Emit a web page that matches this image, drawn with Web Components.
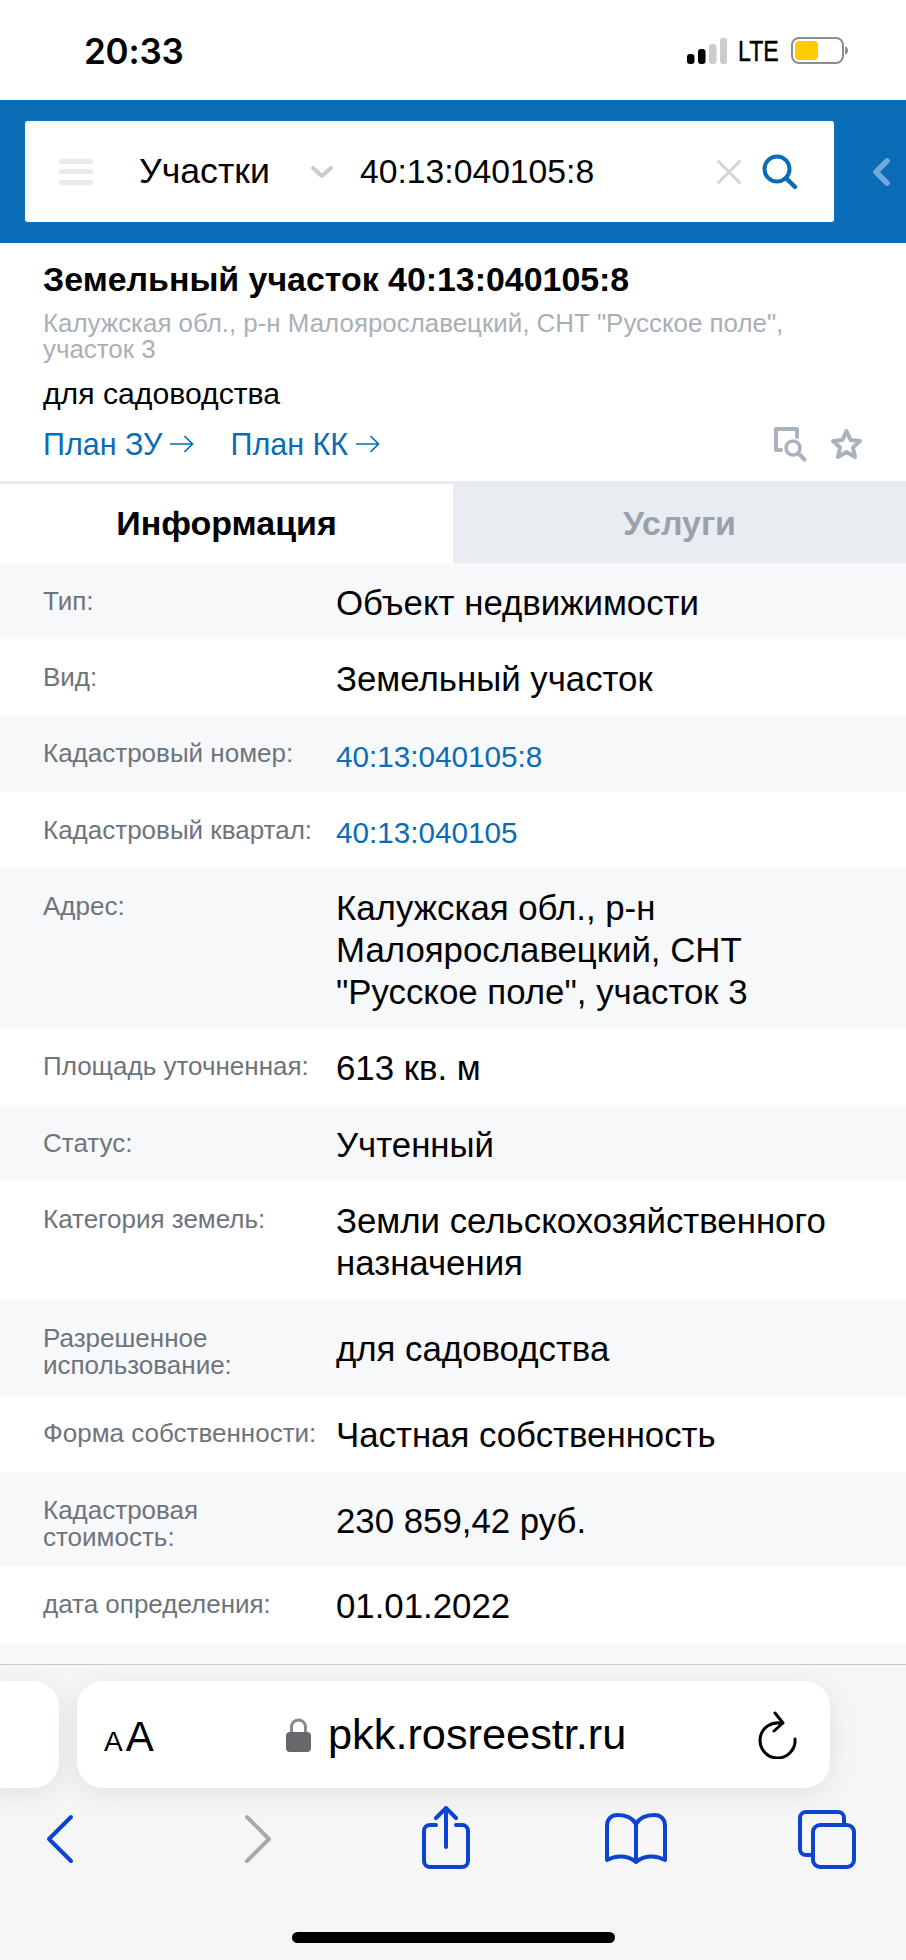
<!DOCTYPE html>
<html><head><meta charset="utf-8">
<style>
html,body{margin:0;padding:0;height:1960px;overflow:hidden;background:#fff}
body{font-family:"Liberation Sans",Arial,sans-serif;display:flex;flex-direction:column;width:906px}
</style></head><body>
<status-bar></status-bar>
<search-header></search-header>
<object-summary></object-summary>
<info-tabs></info-tabs>
<info-table>
<info-row label="Тип:" h="76">Объект недвижимости</info-row>
<info-row label="Вид:" h="76">Земельный участок</info-row>
<info-row label="Кадастровый номер:" h="77" link>40:13:040105:8</info-row>
<info-row label="Кадастровый квартал:" h="76" link>40:13:040105</info-row>
<info-row label="Адрес:" h="160">Калужская обл., р-н Малоярославецкий, СНТ "Русское поле", участок 3</info-row>
<info-row label="Площадь уточненная:" h="77">613 кв. м</info-row>
<info-row label="Статус:" h="76">Учтенный</info-row>
<info-row label="Категория земель:" h="119">Земли сельскохозяйственного назначения</info-row>
<info-row label="Разрешенное использование:" h="95">для садоводства</info-row>
<info-row label="Форма собственности:" h="77">Частная собственность</info-row>
<info-row label="Кадастровая стоимость:" h="94">230 859,42 руб.</info-row>
<info-row label="дата определения:" h="77">01.01.2022</info-row>
</info-table>
<safari-bar></safari-bar>
<script>
function def(name,html){customElements.define(name,class extends HTMLElement{constructor(){super();this.attachShadow({mode:'open'}).innerHTML=html}})}
def('status-bar',`<style>
:host{display:flex;height:100px;flex:none;box-sizing:border-box;padding:2px 57px 0 84px;align-items:center;justify-content:space-between;background:#fff;color:#000}
.t{font:600 35px Inter,"Liberation Sans",sans-serif;letter-spacing:-.2px;line-height:98px}
.r{display:flex;align-items:center}
.lte{font:400 29px "Liberation Sans",sans-serif;-webkit-text-stroke:.4px #000;display:inline-block;width:42px;transform:scaleX(.8);transform-origin:left center;margin:0 11px;line-height:30px}
svg{display:block}
</style><span class="t">20:33</span><span class="r">
<svg width="40" height="26" viewBox="0 0 40 26"><rect x="0" y="16" width="7.500" height="10" rx="3" fill="#000"/><rect x="11" y="11" width="7.500" height="15" rx="3" fill="#000"/><rect x="22" y="6" width="7.500" height="20" rx="3" fill="#ccc"/><rect x="33" y="0" width="7.500" height="26" rx="3" fill="#ccc"/></svg>
<span class="lte">LTE</span>
<svg width="58" height="28" viewBox="0 0 58 28"><rect x="1" y="1" width="51" height="25" rx="7" fill="#fff" stroke="#8d8d8d" stroke-width="2"/><rect x="4" y="4" width="23" height="19" rx="4" fill="#fecb00"/><path d="M54 9.500q3 .5 3 4t-3 4z" fill="#8d8d8d"/></svg>
</span>`);
def('search-header',`<style>
:host{display:flex;height:143px;flex:none;box-sizing:border-box;padding:21px 0 21px 25px;background:#0a6cb7;align-items:stretch}
.card{width:809px;background:#fff;border-radius:3px;display:flex;align-items:center;color:#000;box-shadow:0 0 1px rgba(255,255,255,.5)}
svg{display:block;flex:none}
.a{margin-left:34px}.b{margin-left:46px;width:130px;font-size:35.700px;white-space:nowrap}.c{margin-left:42px}.d{margin-left:27px;font-size:33.700px;width:357px;white-space:nowrap}
.f{margin-left:21px}
</style><div class="card">
<svg class="a" width="34" height="26" viewBox="0 0 34 26"><g fill="#e8e9eb"><rect y="0" width="34" height="5" rx="2"/><rect y="10" width="34" height="5" rx="2"/><rect y="21" width="34" height="5" rx="2"/></g></svg>
<span class="b">Участки</span>
<svg class="c" width="22" height="12" viewBox="0 0 22 12"><path d="M2 2l9 8 9-8" fill="none" stroke="#c7cdd3" stroke-width="4" stroke-linecap="round"/></svg>
<span class="d">40:13:040105:8</span>
<svg width="24" height="24" viewBox="0 0 24 24"><path d="M1.500 1.500l21 21M22.500 1.500l-21 21" stroke="#d4d5d7" stroke-width="3" stroke-linecap="round"/></svg>
<svg class="f" width="36" height="36" viewBox="0 0 36 36"><circle cx="15" cy="15" r="12.500" fill="none" stroke="#0a6cb7" stroke-width="4"/><path d="M24 24l9 9" stroke="#0a6cb7" stroke-width="4.500" stroke-linecap="round"/></svg>
</div>
<svg style="align-self:center;margin-left:38px" width="18" height="28" viewBox="0 0 18 28"><path d="M15 3L4 14l11 11" fill="none" stroke="#74a9d9" stroke-width="5.500" stroke-linecap="round" stroke-linejoin="round"/></svg>`);
const arrow='<svg width="25" height="20" viewBox="0 0 25 20"><path d="M1 10h22.500M15.500 2l8 8-8 8" fill="none" stroke="#0a6cb7" stroke-width="1.700"/></svg>';
def('object-summary',`<style>
:host{display:block;flex:none;height:238px;box-sizing:border-box;padding:16px 43px 0;background:#fff;color:#000}
h1{margin:0;font:700 33.900px/40px "Liberation Sans",sans-serif;white-space:nowrap}
.addr{margin-top:11px;color:#a9afb7;font-size:25.900px;line-height:26px;white-space:nowrap}
.use{margin-top:14px;font-size:30.200px;line-height:36px}
.links{margin-top:9px;display:flex;align-items:center;height:46px;color:#0a6cb7;font-size:30.500px}
.l{display:flex;align-items:center;gap:7px}
.l+.l{margin-left:36px}
.sp{flex:1}
svg{display:block;flex:none}
</style>
<h1>Земельный участок 40:13:040105:8</h1>
<div class="addr">Калужская обл., р-н Малоярославецкий, СНТ "Русское поле",<br>участок 3</div>
<div class="use">для садоводства</div>
<div class="links">
<span class="l">План ЗУ${arrow}</span>
<span class="l">План КК${arrow}</span>
<span class="sp"></span>
<svg width="34" height="35" viewBox="0 0 34 35"><path d="M8 23H3V2h21v8" fill="none" stroke="#a9b2bd" stroke-width="4" stroke-linejoin="round" stroke-linecap="round"/><circle cx="20" cy="21" r="7" fill="none" stroke="#a9b2bd" stroke-width="3.500"/><path d="M25.500 26.500l6 6" stroke="#a9b2bd" stroke-width="4" stroke-linecap="round"/></svg>
<svg style="margin-left:23px" width="33" height="32" viewBox="0 0 33 32"><path d="M16.500 3l4 9 9.500 1-7 6.500 2 9.500-8.500-5-8.500 5 2-9.500-7-6.500 9.500-1z" fill="none" stroke="#a9b2bd" stroke-width="4" stroke-linejoin="round"/></svg>
</div>`);
def('info-tabs',`<style>
:host{display:grid;grid-template-columns:453px 453px;height:82px;flex:none;font:700 34px "Liberation Sans",sans-serif;text-align:center;line-height:84px}
.a{background:#fff;color:#000;box-shadow:inset 0 3px 0 #e9ecf0}.b{background:#e9edf1;color:#99a1ac}
</style><div class="a">Информация</div><div class="b">Услуги</div>`);
def('info-table',`<style>:host{display:flex;flex-direction:column;flex:none;height:1101px;background:#f7f8fa;overflow:hidden}
::slotted(info-row:nth-child(even)){background:#fff}
</style><slot></slot>`);
customElements.define('info-row',class extends HTMLElement{constructor(){super();const s=this.attachShadow({mode:'open'});
s.innerHTML=`<style>
:host{display:grid;grid-template-columns:293px 1fr;box-sizing:border-box;padding:0 0 0 43px;flex:none;background:#f7f8fa}
.k{color:#6e747c;font-size:26px;line-height:27px;padding:25px 8px 0 0;box-sizing:border-box}
.v{color:#000;font-size:34.800px;line-height:42px;padding-top:3px;padding-right:60px;align-self:center}
:host([link]) .v{color:#0a6cb7;font-size:29.700px;padding-top:6px}
</style><div class="k"></div><div class="v"><slot></slot></div>`;}
connectedCallback(){this.shadowRoot.querySelector('.k').textContent=this.getAttribute('label');this.style.height=this.getAttribute('h')+'px'}});
def('safari-bar',`<style>
:host{display:block;flex:1;min-height:0;background:#f6f6f7;border-top:1px solid #c9c9cc;box-sizing:border-box;overflow:hidden;font-family:"Liberation Sans",sans-serif}
.pills{display:flex;gap:18px;margin:16px 0 0 -20px;height:107px}
.pill{background:#fff;border-radius:26px;box-shadow:0 6px 30px rgba(0,0,0,.09)}
.p1{width:79px}.p2{width:753px;display:flex;align-items:center;color:#000}
.aa{margin-left:27px;font-size:42px;width:51px;white-space:nowrap;padding-top:4px}.aa small{font-size:28px;margin-right:3px}
.url{margin-left:131px;display:flex;align-items:center;gap:17px;font-size:43.300px;width:342px;white-space:nowrap}
.rl{margin-left:130px}
.nav{display:flex;align-items:flex-start;height:100px;margin-top:18px;padding-left:45px}
svg{display:block;flex:none}
.bar{width:323px;height:11px;background:#000;border-radius:6px;margin:26px auto 0}
</style>
<div class="pills"><div class="pill p1"></div><div class="pill p2">
<span class="aa"><small>A</small>A</span>
<span class="url"><svg width="25" height="34" viewBox="0 0 25 34"><path d="M5.500 15V9a7 7 0 0 1 14 0v6" fill="none" stroke="#88888d" stroke-width="3"/><rect x="0" y="14" width="25" height="20" rx="4" fill="#67676c"/></svg>pkk.rosreestr.ru</span>
<svg class="rl" width="40" height="48" viewBox="0 0 40 48"><path d="M24 8.500A17.500 17.500 0 1 0 37 24" fill="none" stroke="#000" stroke-width="3" stroke-linecap="round" transform="translate(0,4)"/><path d="M17 2l8 10-9 8" fill="none" stroke="#000" stroke-width="3" stroke-linecap="round" stroke-linejoin="round"/></svg>
</div></div>
<div class="nav">
<svg style="margin-top:8px" width="30" height="50" viewBox="0 0 30 50"><path d="M26 3L4 25l22 22" fill="none" stroke="#0c44d0" stroke-width="4" stroke-linecap="round" stroke-linejoin="round"/></svg>
<svg style="margin-top:8px;margin-left:168px" width="30" height="50" viewBox="0 0 30 50"><path d="M4 3l22 22L4 47" fill="none" stroke="#a9a9a9" stroke-width="4" stroke-linecap="round" stroke-linejoin="round"/></svg>
<svg style="margin-left:148px" width="50" height="64" viewBox="0 0 50 64"><path d="M15 19H9a6 6 0 0 0-6 6v30a6 6 0 0 0 6 6h32a6 6 0 0 0 6-6V25a6 6 0 0 0-6-6h-6" fill="none" stroke="#0c44d0" stroke-width="4" stroke-linecap="round"/><path d="M25 41V3M15 12l10-10 10 10" fill="none" stroke="#0c44d0" stroke-width="4" stroke-linecap="round" stroke-linejoin="round"/></svg>
<svg style="margin-top:6px;margin-left:133px" width="64" height="54" viewBox="0 0 64 54"><path d="M32 12C28 5 20 3 14 3 7 3 3 7 3 14v34c9-5 21-5 29 2 8-7 20-7 29-2V14c0-7-4-11-11-11-6 0-14 2-18 9zV50" fill="none" stroke="#0c44d0" stroke-width="4" stroke-linecap="round" stroke-linejoin="round"/></svg>
<svg style="margin-top:3px;margin-left:129px" width="60" height="62" viewBox="0 0 60 62"><path d="M16 46H9a6 6 0 0 1-6-6V9a6 6 0 0 1 6-6h32a6 6 0 0 1 6 6v6" fill="none" stroke="#0c44d0" stroke-width="4" stroke-linecap="round"/><rect x="16" y="16" width="41" height="42" rx="7" fill="none" stroke="#0c44d0" stroke-width="4"/></svg>
</div>
<div class="bar"></div>`);
</script>
</body></html>
